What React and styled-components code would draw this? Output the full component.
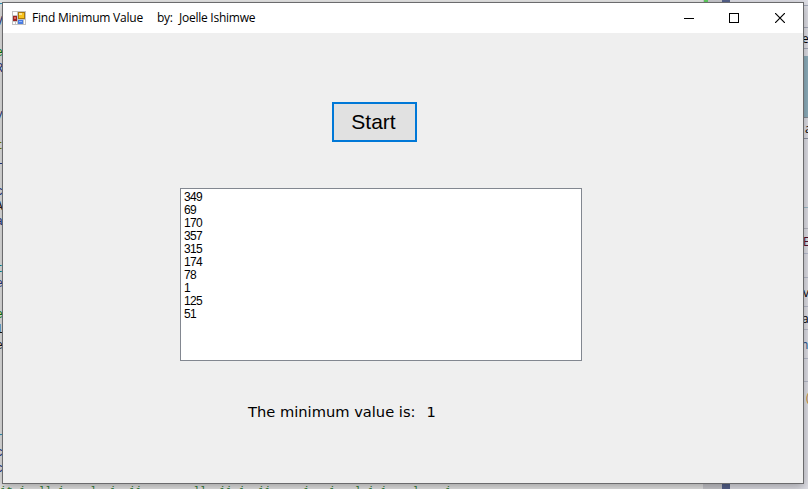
import React from 'react';
import styled, { createGlobalStyle } from 'styled-components';

const GlobalStyle = createGlobalStyle`
  * { box-sizing: border-box; }
  body { margin: 0; overflow: hidden; background: #dcdcdc; }
`;

const Desktop = styled.div`
  position: relative;
  width: 808px;
  height: 489px;
  overflow: hidden;
  background: #e0e0e0;
  color: #000;
`;

const Editor = styled.div`
  display: grid;
  grid-template-columns: 703px 19px 8px 1fr;
  width: 808px;
  height: 489px;
`;

const Code = styled.div`
  overflow: hidden;
  height: 489px;
  background: #e6e6e6;
`;

const CodeLine = styled.div`
  height: 15.4px;
  margin-left: -4.5px;
  font: 12.5px/15.4px 'Liberation Mono', monospace;
  white-space: pre;
  color: ${(p) => p.$color || '#1f377f'};
`;

const CommentLine = styled.div`
  height: 15px;
  margin-top: 6.6px;
  font: 10.75px/15px 'Liberation Mono', monospace;
  white-space: pre;
  color: #2f7d32;
`;

const ScrollTrack = styled.div`
  display: flex;
  justify-content: flex-start;
  background: #cacacf;
`;

const ChangeMark = styled.div`
  width: 4px;
  height: 3px;
  margin-left: 1px;
  background: #5fcf5f;
`;

const Splitter = styled.div`
  background: #56628c;
`;

const SidePanel = styled.div`
  display: flex;
  flex-direction: column;
  align-items: flex-end;
  background: #dfdfe6;
`;

const SideRow = styled.div`
  flex: none;
  display: flex;
  align-items: center;
  width: 5px;
  height: ${(p) => p.$h}px;
  padding-top: 2px;
  overflow: hidden;
  border-bottom: ${(p) => (p.$line ? `1px solid ${p.$line}` : '0')};
  background: ${(p) => p.$bg || 'transparent'};
  color: ${(p) => p.$color || '#000'};
  font: 12px/1 'Open Sans', sans-serif;
`;

const SideText = styled.span`
  margin-left: ${(p) => p.$shift || 0}px;
`;

const Window = styled.div`
  position: absolute;
  left: 2px;
  top: 2px;
  width: 802px;
  height: 482px;
  display: flex;
  flex-direction: column;
  border: 1px solid #6b6b6d;
  background: #efefef;
  box-shadow: 0 3px 9px rgba(0, 0, 0, 0.3);
`;

const TitleBar = styled.div`
  flex: none;
  display: flex;
  align-items: center;
  height: 30px;
  padding: 0 0 0 9px;
  background: #fff;
`;

const Title = styled.div`
  flex: 1;
  display: flex;
  margin-left: 6px;
  font: 12px/16px 'Open Sans', sans-serif;
  white-space: pre;
`;

const TitlePart = styled.span`
  width: ${(p) => p.$w}px;
  letter-spacing: ${(p) => p.$track}px;
`;

const CaptionButton = styled.button`
  display: flex;
  align-items: center;
  justify-content: center;
  width: 45px;
  height: 30px;
  padding: 0;
  border: 0;
  background: transparent;

  &:last-child {
    width: 47px;
  }
`;

const Form = styled.div`
  flex: 1;
  display: flex;
  flex-direction: column;
  align-items: flex-start;
  padding-top: 69px;
`;

const StartButton = styled.button`
  width: 85px;
  height: 40px;
  margin-left: 329px;
  padding: 0 2px 1px 0;
  border: 2px solid #0078d7;
  background: #e1e1e1;
  color: #000;
  font: 21px/24px 'Liberation Sans', sans-serif;
`;

const ListBox = styled.ul`
  width: 402px;
  height: 173px;
  margin: 46px 0 0 177px;
  padding: 2px 3px;
  border: 1px solid #828790;
  background: #fff;
  list-style: none;
`;

const ListItem = styled.li`
  height: 13px;
  font: 12px/13px 'Liberation Sans', sans-serif;
  letter-spacing: -0.67px;
`;

const Result = styled.div`
  display: flex;
  margin: 42px 0 0 245px;
  font: 14.67px/18px 'DejaVu Sans', sans-serif;
  white-space: pre;
`;

const ResultLabel = styled.span`
  width: 178.5px;
`;

const codeLines = [
  ['r', '#2b91af'], ['V'], [''], ['e', '#008000'], ['R'], [''], [''], ['y'], [''], ['t', '#808000'],
  ['L'], [''], ['c'], ['A', '#222'], ['a'], [''], [''], ['t', '#008b8b'], ['e'], [''],
  ['e', '#008000'], ['1', '#111'], ['e', '#111'], [''], [''], [''], [''], [''], ['r', '#2b91af'], ['c'], ['c'],
];

const sideRows = [
  { h: 6, line: '#a4a9b8' },
  { h: 22, line: '#a4a9b8' },
  { h: 21, line: '#a4a9b8', text: 'e', shift: -1 },
  { h: 7 },
  { h: 62, bg: '#8daebc', line: '#888d96' },
  { h: 21, line: '#8b91a0', text: 'a', shift: 2 },
  { h: 69, line: '#9fbbc9' },
  { h: 21, line: '#b6b7c1' },
  { h: 25, line: '#b8bdd0', text: 'E', color: '#54102d' },
  { h: 24, line: '#b7bbca' },
  { h: 29, line: '#b7bbca', text: 'v', shift: 0 },
  { h: 23, line: '#b7bbca', text: 'a', shift: -1 },
  { h: 29, line: '#b7bbca', text: 'n', color: '#1c4e8c', shift: -2 },
  { h: 23, line: '#b7bbca' },
  { h: 29, text: '(', color: '#c08a35', shift: 3 },
];

const values = [349, 69, 170, 357, 315, 174, 78, 1, 125, 51];

const AppIcon = () => (
  <svg width="14" height="14" viewBox="0 0 14 14" shapeRendering="crispEdges">
    <rect width="14" height="14" fill="#c2c2c2" />
    <path fill="#fff" d="M1 1h4v3H1zM1 11h2v2H1zM4 11h1v2H4zM12 9h1v4h-1z" />
    <rect x="1" y="5" width="4" height="5" fill="#9c2424" />
    <rect x="2" y="6" width="2" height="2" fill="#e06a5a" />
    <rect x="6" y="1" width="7" height="7" fill="#a9790d" />
    <rect x="7" y="2" width="5" height="5" fill="#f8c21c" />
    <rect x="7" y="2" width="3" height="2" fill="#ffe58a" />
    <rect x="6" y="9" width="5" height="4" fill="#4a7be0" />
    <rect x="7" y="10" width="3" height="1" fill="#8fb6ff" />
  </svg>
);

export default function App() {
  return (
    <>
      <GlobalStyle />
      <Desktop>
        <Editor aria-hidden="true">
          <Code>
            {codeLines.map(([text, color], i) => (
              <CodeLine key={i} $color={color}>{text || ' '}</CodeLine>
            ))}
            <CommentLine>{'it i  ll i    l  i  ii        ll  ii i  ii     i   i   l i i    l    i'}</CommentLine>
          </Code>
          <ScrollTrack><ChangeMark /></ScrollTrack>
          <Splitter />
          <SidePanel>
            {sideRows.map((row, i) => (
              <SideRow key={i} $h={row.h} $line={row.line} $bg={row.bg} $color={row.color}>
                {row.text && <SideText $shift={row.shift}>{row.text}</SideText>}
              </SideRow>
            ))}
          </SidePanel>
        </Editor>
        <Window>
          <TitleBar>
            <AppIcon />
            <Title>
              <TitlePart $w={125} $track={-0.22}>Find Minimum Value</TitlePart>
              <TitlePart $w={22} $track={-0.3}>by:</TitlePart>
              <TitlePart $w={90} $track={-0.25}>Joelle Ishimwe</TitlePart>
            </Title>
            <CaptionButton aria-label="Minimize">
              <svg width="10" height="10" shapeRendering="crispEdges"><path d="M0 5.5h10" stroke="#000" /></svg>
            </CaptionButton>
            <CaptionButton aria-label="Maximize">
              <svg width="10" height="10" shapeRendering="crispEdges"><path d="M.5.5h9v9h-9z" fill="none" stroke="#000" /></svg>
            </CaptionButton>
            <CaptionButton aria-label="Close">
              <svg width="10" height="10"><path d="M0 0l10 10M10 0L0 10" stroke="#000" strokeWidth="1.2" /></svg>
            </CaptionButton>
          </TitleBar>
          <Form>
            <StartButton>Start</StartButton>
            <ListBox>
              {values.map((value) => <ListItem key={value}>{value}</ListItem>)}
            </ListBox>
            <Result>
              <ResultLabel>The minimum value is:</ResultLabel>
              <span>1</span>
            </Result>
          </Form>
        </Window>
      </Desktop>
    </>
  );
}
